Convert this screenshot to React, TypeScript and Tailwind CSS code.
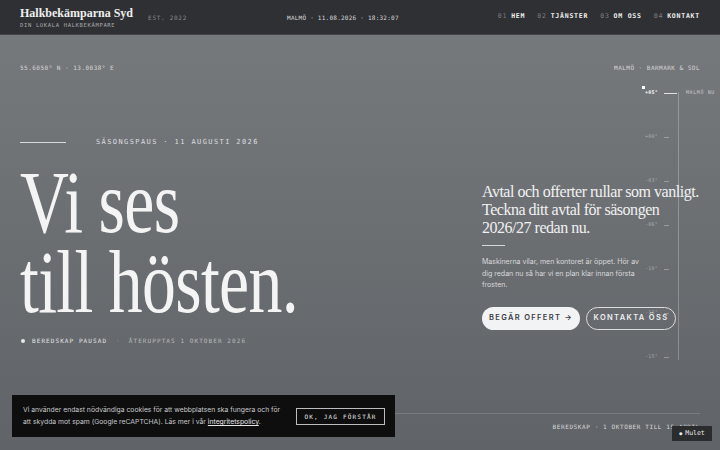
const mono = "font-['DejaVu_Sans_Mono',monospace]";
const serif = "font-['Liberation_Serif',serif]";
const sans = "font-['Inter',sans-serif]";

const nav = [
  ["01", "HEM"],
  ["02", "TJÄNSTER"],
  ["03", "OM OSS"],
  ["04", "KONTAKT"],
];

const skala = ["+00°", "-03°", "-06°", "-10°", "-13°", "-15°"];

export default function App() {
  return (
    <div className="relative w-full h-[450px] overflow-hidden flex flex-col bg-[#6a6d71]">
      {/* header */}
      <header className="h-[35px] shrink-0 flex items-center px-5 bg-[#2f3034] border-b border-white/10">
        <div className="flex items-center">
          <div className="flex flex-col">
            <div className={`${serif} font-bold text-[12px] leading-[14px] text-[#eeeeee]`}>
              Halkbekämparna Syd
            </div>
            <div className={`${mono} text-[5.5px] leading-[8px] tracking-[0.12em] text-[#a9aaad] mt-[1px]`}>
              DIN LOKALA HALKBEKÄMPARE
            </div>
          </div>
          <div className={`${mono} text-[6px] tracking-[0.12em] text-[#8a8b8e] ml-[15px]`}>
            EST. 2022
          </div>
        </div>
        <div className={`${mono} text-[6px] tracking-[0.04em] text-[#d9d9db] ml-[100px]`}>
          MALMÖ · 11.08.2026 · 18:32:07
        </div>
        <nav className={`${mono} text-[6.5px] tracking-[0.12em] ml-auto flex gap-[12px]`}>
          {nav.map(([n, t]) => (
            <div key={n} className="flex gap-[4px]">
              <span className="text-[#7d7e82]">{n}</span>
              <span className="text-[#f0f0f0] font-bold">{t}</span>
            </div>
          ))}
        </nav>
      </header>

      {/* main */}
      <main className="relative flex-1 flex flex-col bg-gradient-to-b from-[#76797c] to-[#606367]">
        <div className={`${mono} text-[6px] leading-[8px] tracking-[0.08em] text-[#d5d6d8] flex justify-between px-5 pt-[29px]`}>
          <span>55.6050° N · 13.0038° E</span>
          <span>MALMÖ · BARMARK &amp; SOL</span>
        </div>

        <div className="flex px-5">
          <div className="flex-1 flex flex-col">
            <div className="flex items-center h-[10px] mt-[65px]">
              <div className="w-[46px] h-px bg-[#d9dadc]" />
              <span className={`${mono} text-[7px] tracking-[0.2em] text-[#dcdde0] ml-[30px]`}>
                SÄSONGSPAUS · 11 AUGUSTI 2026
              </span>
            </div>
            <h1 className={`${serif} text-[88px] leading-[80px] text-[#f4f4f4] font-normal mt-[16px] origin-left scale-x-[0.77] tracking-[-0.01em] whitespace-nowrap`}>
              <div>Vi ses</div>
              <div>till hösten.</div>
            </h1>
            <div className={`${mono} text-[6px] leading-[8px] tracking-[0.18em] flex items-center mt-[14px]`}>
              <span className="w-[4px] h-[4px] rounded-full bg-[#e8e8e8] ml-[1px]" />
              <span className="text-[#e4e5e7] ml-[7px]">BEREDSKAP PAUSAD</span>
              <span className="text-[#9a9c9f] ml-[9px]">·</span>
              <span className="text-[#b9bbbe] ml-[8px]">ÅTERUPPTAS 1 OKTOBER 2026</span>
            </div>
          </div>

          <div className="w-[218px] flex flex-col">
            <p className={`${serif} text-[16px] leading-[18px] tracking-[-0.03em] text-[#f1f1f2] mt-[111px]`}>
              Avtal och offerter rullar som vanligt.
              <br />
              Teckna ditt avtal för säsongen
              <br />
              2026/27 redan nu.
            </p>
            <div className="w-[23px] h-px bg-[#d6d7d9] mt-[8px]" />
            <p className={`${sans} text-[7px] leading-[11.5px] text-[#d9dadc] mt-[10px] w-[160px]`}>
              Maskinerna vilar, men kontoret är öppet. Hör av dig redan nu så har vi en plan klar innan första frosten.
            </p>
            <div className={`${sans} flex gap-[6px] mt-[16px] text-[7.5px] font-semibold tracking-[0.18em]`}>
              <button className="h-[23px] w-[98px] rounded-full bg-[#f2f3f5] text-[#3b3d41]">
                BEGÄR OFFERT →
              </button>
              <button className="h-[23px] w-[90px] rounded-full border border-[#dcdde0] text-[#eeeff0]">
                KONTAKTA ÖSS
              </button>
            </div>
          </div>
        </div>

        {/* thermometer scale */}
        <div className="absolute left-[678px] top-[57px] w-px h-[268px] bg-white/25" />
        <div className={`${mono} absolute left-[643px] top-[53px] flex flex-col text-[5px] tracking-[0.05em]`}>
          <div className="relative h-[44px] flex items-start">
            <span className="absolute -left-[1px] -top-[2px] w-[3px] h-[3px] bg-white" />
            <div className="h-[10px] flex items-center">
              <span className="text-[#f4f4f4] font-bold w-[19px] ml-[2px]">+05°</span>
              <span className="w-[13px] h-px bg-[#e0e0e0]" />
              <span className="text-[#c5c6c8] ml-[9px] tracking-[0.12em]">MALMÖ NU</span>
            </div>
          </div>
          {skala.map((s) => (
            <div key={s} className="h-[44px] flex items-start">
              <div className="h-[10px] flex items-center text-white/40">
                <span className="w-[19px] ml-[2px]">{s}</span>
                <span className="w-[5px] h-px bg-white/30" />
              </div>
            </div>
          ))}
        </div>

        <footer className={`${mono} mt-auto mx-5 h-[37px] border-t border-white/15 flex justify-between pt-[9px] text-[6px] leading-[8px] tracking-[0.1em] text-[#d8d9db]`}>
          <span>© 2026 HALKBEKÄMPARNA SYD AB · ORG.NR 559412-0871 · MALMÖ · SKÅNE · SVERIGE</span>
          <span>BEREDSKAP · 1 OKTOBER TILL 15 APRIL</span>
        </footer>
      </main>

      {/* cookie bar */}
      <div className="fixed left-3 top-[395px] w-[383px] h-[42px] bg-[#0e0e0f] flex items-center pl-[11px] pr-[10px]">
        <p className={`${sans} text-[6.8px] leading-[12px] text-[#c9c9cb] w-[262px] shrink-0`}>
          Vi använder endast nödvändiga cookies för att webbplatsen ska fungera och för att skydda mot spam (Google reCAPTCHA). Läs mer i vår{" "}
          <span className="underline text-[#e6e6e6]">integritetspolicy</span>.
        </p>
        <button className={`${mono} ml-auto w-[89px] h-[17px] border border-[#bdbdbf] text-[6px] tracking-[0.2em] text-[#e8e8e8]`}>
          OK, JAG FÖRSTÅR
        </button>
      </div>

      {/* weather badge */}
      <div className={`${mono} fixed right-2 top-[426px] h-[15px] w-[40px] bg-[#2b2c2e] flex items-center justify-center gap-[3px] text-[6.5px] text-[#ececec]`}>
        <span className="text-[5px]">●</span>
        <span>Mulet</span>
      </div>
    </div>
  );
}
